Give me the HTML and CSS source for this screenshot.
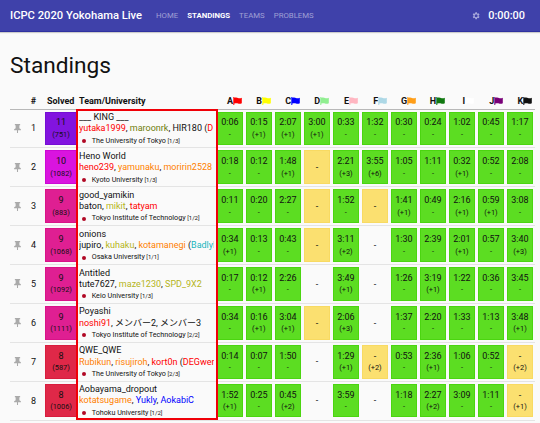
FILE: index.html
```html
<!DOCTYPE html>
<html lang="en">
<head>
<meta charset="utf-8">
<title>ICPC 2020 Yokohama Live</title>
<link rel="stylesheet" href="styles.css">
</head>
<body>
<header class="navbar">
  <span class="brand">ICPC 2020 Yokohama Live</span>
  <nav class="links">
    <a>HOME</a><a class="active">STANDINGS</a><a>TEAMS</a><a>PROBLEMS</a>
  </nav>
  <svg class="gear" viewBox="0 0 24 24"><path fill-rule="evenodd" d="M19.4 13a7.800 7.800 0 0 0 0-2l2.100-1.600-2-3.500-2.500 1a7.500 7.500 0 0 0-1.700-1L15 3.300h-4l-.4 2.600a7.500 7.500 0 0 0-1.700 1l-2.500-1-2 3.500L6.500 11a7.800 7.800 0 0 0 0 2l-2.100 1.600 2 3.500 2.500-1a7.500 7.500 0 0 0 1.700 1l.4 2.600h4l.4-2.600a7.500 7.500 0 0 0 1.700-1l2.500 1 2-3.500zM13 15.800a3.800 3.800 0 1 1 0-7.600 3.800 3.800 0 0 1 0 7.600z"/></svg>
  <span class="clock">0:00:00</span>
</header>
<main>
  <h1>Standings</h1>
  <section class="standings" id="standings">
    <div class="row head" id="head">
      <span></span><span class="rank">#</span><span class="solved-head">Solved</span><span class="team-head">Team/University</span>
    </div>
  </section>
</main>
<script src="app.js"></script>
</body>
</html>
```
FILE: styles.css
```css
*, *::after { box-sizing: border-box; }
body {
  margin: 0;
  height: 423px;
  overflow: hidden;
  background: #fafafa;
  color: #111;
  font-family: Roboto, "Noto Sans CJK JP", sans-serif;
  font-size: 9px;
}
.navbar {
  display: flex;
  align-items: center;
  height: 32px;
  padding: 0 15px 0 10px;
  background: #3f41aa;
  border-bottom: 1px solid #2f31a0;
  box-shadow: 0 0 1px 1px #ccc;
  color: #fff;
}
.brand { width: 146px; font-size: 11.200px; font-weight: 500; white-space: nowrap; }
.links { display: flex; gap: 9px; font-size: 7.800px; color: #a0a0d5; }
.links .active { color: #fff; font-weight: 700; }
.gear { width: 9.500px; height: 9.500px; margin-left: auto; fill: #a9a9dc; }
.clock { margin-left: 7.500px; font-size: 10.900px; font-weight: 500; }
h1 { margin: 19px 0 0 10px; font-size: 22.700px; line-height: 30px; font-weight: 400; }
.standings { position: relative; width: 524.500px; margin: 12px 0 0 10px; }
.standings::after {
  content: "";
  position: absolute;
  left: 66px;
  top: 16px;
  width: 142px;
  height: 310.500px;
  border: 2px solid #f00008;
}
.row {
  display: grid;
  grid-template-columns: 14px 20.500px 32.500px 138.300px repeat(11, 29.020px);
  height: 38.880px;
  border-bottom: 1px solid #e4e4e4;
  align-items: center;
}
.head { height: 16.500px; border-bottom-color: #b8b8b8; font-weight: 700; }
.head .flagcell { display: flex; justify-content: flex-end; align-items: center; padding-right: 2.300px; }
.flag { width: 9px; height: 8px; }
.pin { width: 9px; height: 9px; fill: #aaa; margin-left: 2.500px; }
.rank { text-align: center; padding-right: 1.500px; }
.solved-head { padding-left: 2.500px; }
.team-head { padding-left: 2px; }
.score {
  width: 31.500px;
  margin-left: .8px;
}
.score, .cell {
  height: 33.700px;
  display: flex;
  flex-direction: column;
  justify-content: center;
  align-items: center;
  padding-top: .6px;
  line-height: 11px;
}
.score small, .cell small { font-size: 7.400px; line-height: 11px; margin-top: .5px; }
.eleven { background: #8214df; border: 1px solid #750ed4; }
.ten { background: #d914df; border: 1px solid #cc08d5; }
.nine { background: #df1f92; border: 1px solid #d91388; }
.eight { background: #df2848; border: 1px solid #d81d3e; }
.cell { width: 26.700px; margin-left: 1.200px; }
.ok { background: #5cdd22; border: 1px solid #4bd510; }
.pending { background: #fbe070; border: 1px solid #f8da62; }
.team { padding: 2.300px 0 0 2px; min-width: 0; line-height: 11.300px; }
.team div { white-space: nowrap; overflow: hidden; width: 135px; }
.team .uni { display: flex; align-items: center; font-size: 7.200px; line-height: 12.500px; }
.uni i { width: 4px; height: 4px; border-radius: 50%; background: #b00824; margin: 0 5.500px 0 3.200px; }
.uni small { font-size: 6px; margin-left: 1.500px; }
.red { color: #ff0000; }
.orange { color: #ff8000; }
.yellow { color: #b5b51a; }
.olive { color: #6f7d0a; }
.cyan { color: #18b5bd; }
.blue { color: #0000ff; }
```
FILE: app.js
```js
const problems = [
  ["A", "#ff0000"], ["B", "#ffff00"], ["C", "#0000ff"], ["D", "#90ee90"],
  ["E", "#ffb6c1"], ["F", "#add8e6"], ["G", "#ff9e18"], ["H", "#107810"],
  ["I", "#ffffff"], ["J", "#780078"], ["K", "#111111"]
];
// Each result is "time", "time+wrong answers", "?" while pending, or "-" when not tried.
const teams = [
  [11, 751, "___ KING ___", "<span class='red'>yutaka1999</span>, <span class='olive'>maroonrk</span>, HIR180 (<span class='red'>D</span>", "The University of Tokyo", "1/3", "0:06 0:15+1 2:07+1 3:00+1 0:33 1:32 0:30 0:24 1:02 0:45 1:17"],
  [10, 1082, "Heno World", "<span class='red'>heno239</span>, <span class='orange'>yamunaku</span>, <span class='orange'>moririn2528</span>", "Kyoto University", "1/3", "0:18 0:12 1:48+1 ? 2:21+3 3:55+6 1:05 1:11 0:32+1 0:52 2:08"],
  [9, 883, "good_yamikin", "baton, <span class='yellow'>mikit</span>, <span class='red'>tatyam</span>", "Tokyo Institute of Technology", "1/2", "0:11 0:20 2:27 ? 1:52 ? 1:41+1 0:49 2:16+1 0:59+1 3:08"],
  [9, 1068, "onions", "jupiro, <span class='yellow'>kuhaku</span>, <span class='orange'>kotamanegi</span> (<span class='cyan'>Badlyl</span>", "Osaka University", "1/1", "0:34+1 0:13 0:43 ? 3:11+2 - 1:30 2:39 2:01+1 0:57 3:40+3"],
  [9, 1092, "Antitled", "tute7627, <span class='yellow'>maze1230</span>, <span class='yellow'>SPD_9X2</span>", "Keio University", "1/3", "0:17 0:12+1 2:26 - 3:49+1 - 1:26 3:19+1 1:22 0:36 3:45"],
  [9, 1111, "Poyashi", "<span class='red'>noshi91</span>, メンバー2, メンバー3", "Tokyo Institute of Technology", "2/2", "0:34 0:16+1 3:04+1 ? 2:06+3 - 1:37 2:20 1:33 1:13 3:48+1"],
  [8, 587, "QWE_QWE", "<span class='orange'>Rubikun</span>, <span class='orange'>risujiroh</span>, <span class='red'>kort0n</span> (<span class='red'>DEGwer</span>", "The University of Tokyo", "2/3", "0:14 0:07 1:50 - 1:29+1 ?+2 0:53 2:36+1 1:06 0:52 ?+2"],
  [8, 1006, "Aobayama_dropout", "<span class='orange'>kotatsugame</span>, <span class='blue'>Yukly</span>, <span class='blue'>AokabiC</span>", "Tohoku University", "1/2", "1:52+1 0:25 0:45+2 - 3:59 - 1:18 2:27+2 3:09 1:11 ?+1"]
];
const tones = { 11: "eleven", 10: "ten", 9: "nine", 8: "eight" };

document.getElementById("head").insertAdjacentHTML("beforeend", problems.map(([name, color]) =>
  `<span class="flagcell">${name}<svg class="flag" viewBox="0 0 9 8"><path fill="${color}" d="M.3 0h1v.8C3 .1 4 .4 5 .9s2.500.4 3.800-.2v5.600C7.500 7 6 7 5 6.500s-2-.4-3.700.1V8h-1z"/></svg></span>`
).join(""));

function cell(result) {
  const [time, wrong] = result.split("+");
  if (time === "-") return `<div class="cell">-</div>`;
  const pending = time === "?";
  const extra = wrong ? `<small>(+${wrong})</small>` : pending ? "" : "<small>-</small>";
  return `<div class="cell ${pending ? "pending" : "ok"}">${pending ? "-" : time}${extra}</div>`;
}

document.getElementById("standings").insertAdjacentHTML("beforeend", teams.map(
  ([solved, penalty, name, members, university, place, results], i) => `
  <div class="row">
    <svg class="pin" viewBox="0 0 12 12"><path d="M2.500 0h7v1.500h-1v4L10.500 7v1.200H6.700V12H5.300V8.200H1.500V7l2-1.500v-4h-1z"/></svg>
    <span class="rank">${i + 1}</span>
    <div class="score ${tones[solved]}">${solved}<small>(${penalty})</small></div>
    <div class="team"><div>${name}</div><div>${members}</div><div class="uni"><i></i>${university}<small>[${place}]</small></div></div>
    ${results.split(" ").map(cell).join("")}
  </div>`
).join(""));
```
